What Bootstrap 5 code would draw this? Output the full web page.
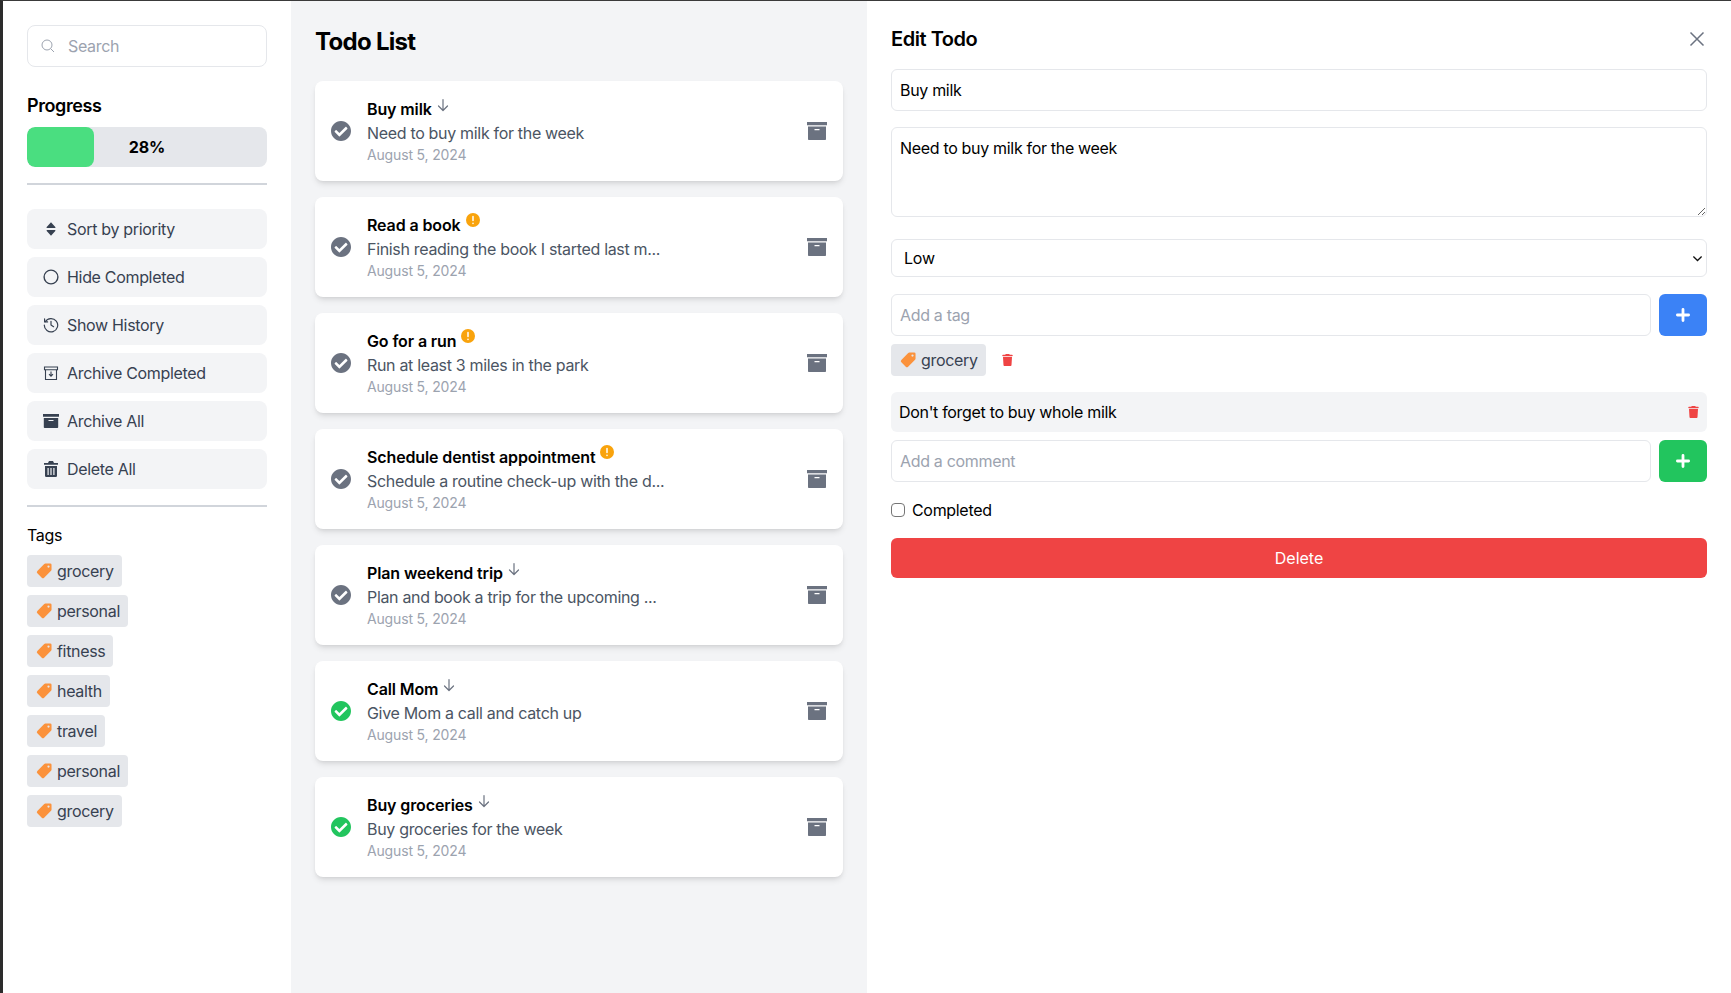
<!DOCTYPE html>
<html lang="en">
<head>
<meta charset="utf-8">
<title>Todo List</title>
<link href="https://cdn.jsdelivr.net/npm/bootstrap@5.3.0/dist/css/bootstrap.min.css" rel="stylesheet">
<style>
html,body{height:100%;overflow:hidden}
body{font-family:Inter,"Liberation Sans",sans-serif;font-size:16px;line-height:24px;color:#000;background:#fff;letter-spacing:-.32px}
.app-frame{height:993px;border-top:1px solid #3a3a3a;border-left:3px solid #2c2c2c}
.side-col{width:288px;padding:24px}
.list-col{width:576px;padding:24px;background:#f3f4f6}
.edit-col{width:864px;padding:24px}
.field{border:1px solid #e5e7eb;border-radius:6px;height:42px;padding:8px;font-size:16px;line-height:24px;color:#000;box-shadow:none;letter-spacing:-.32px}
.field::placeholder{color:#9ca3af;opacity:1}
.search-wrap{height:42px}
.search-field{border-radius:8px;padding-left:40px;height:42px}
.search-ico{position:absolute;left:14px;top:14px;width:14px;height:14px;color:#9ca3af}
.side-head{font-size:18px;line-height:28px;font-weight:600;margin:25px 0 7px;letter-spacing:-.4px}
.prog-track{height:40px;background:#e5e7eb;border-radius:8px;position:relative;overflow:hidden}
.prog-fill{background:#4ade80;border-radius:8px}
.prog-text{position:absolute;inset:0;font-weight:700;line-height:40px;text-align:center;letter-spacing:0}
.side-rule{border:0;border-top:2px solid #d1d5db;opacity:1;margin:16px 0 24px}
.rule-low{margin:16px 0 16px}
.side-btn{height:40px;background:#f3f4f6;color:#374151;border:0;border-radius:8px;padding:0 16px;font-size:16px;line-height:24px;text-align:left;letter-spacing:-.32px}
.side-ico{width:16px;height:16px;flex:none;color:#374151}
.tags-head{font-size:16px;line-height:24px;font-weight:400;margin-bottom:8px}
.chip{height:32px;background:#e5e7eb;color:#374151;border-radius:4px;padding:0 8px;line-height:32px;width:max-content}
.chip-ico{width:18px;height:18px;flex:none;margin-right:4px;color:#fb923c}
.page-title{font-size:24px;line-height:32px;font-weight:700;margin:1px 0 23px;letter-spacing:-.7px}
.todo-box{height:100px;border:0;border-radius:8px;padding:16px;box-shadow:0 4px 6px -1px rgba(0,0,0,.1),0 2px 4px -2px rgba(0,0,0,.1)}
.round-ico{width:20px;height:20px;flex:none}
.ico-muted{color:#6b7280}
.ico-done{color:#22c55e}
.todo-head{gap:5px}
.todo-name{font-weight:600;line-height:24px;letter-spacing:-.12px}
.todo-desc{color:#4b5563;line-height:24px}
.todo-date{color:#9ca3af;font-size:14px;line-height:20px;letter-spacing:-.16px}
.prio-low{width:12px;height:14px;margin-top:1px;color:#6b7280;flex:none}
.prio-mid{width:14px;height:14px;margin-top:0;flex:none}
.box-ico{width:20px;height:20px;flex:none;color:#6b7280}
.edit-title{font-size:20px;line-height:28px;font-weight:600;margin:0;letter-spacing:-.45px}
.close-x{width:16px;height:16px;color:#6b7280;margin-right:2px}
.note-field{height:90px;resize:vertical}
.level-field{height:38px;border:1px solid #e5e7eb;border-radius:6px;padding:0 24px 0 12px;font-size:16px;color:#000;box-shadow:none;letter-spacing:-.2px;background-position:right 3px center;background-size:11px 11px;
background-image:url("data:image/svg+xml,%3csvg xmlns='http://www.w3.org/2000/svg' viewBox='0 0 16 16'%3e%3cpath fill='none' stroke='%23111' stroke-width='1.800' d='M2 5l6 6 6-6'/%3e%3c/svg%3e")}
.add-btn{width:48px;height:42px;border:0;border-radius:6px;padding:0;flex:none}
.add-blue{background:#3b82f6}
.add-green{background:#22c55e}
.plus-ico{width:14px;height:14px;color:#fff}
.trash-red{width:11px;height:12px;color:#ef4444;flex:none}
.note-line{height:40px;background:#f3f4f6;border-radius:6px;padding:0 8px}
.check-row{height:24px;gap:7px}
.check-box{width:14px;height:14px;margin:0;border:1px solid #767676;border-radius:3px;flex:none}
.remove-btn{height:40px;background:#ef4444;color:#fff;border:0;border-radius:6px;font-size:16px;letter-spacing:0}
.gap-edit-a{margin-top:16px}
.gap-edit-b{margin-top:22px}
.gap-edit-c{margin-top:17px}
</style>
</head>
<body>
<svg width="0" height="0" class="position-absolute">
  <symbol id="i-check" viewBox="8 8 496 496"><path fill="currentColor" d="M504 256c0 136.967-111.033 248-248 248S8 392.967 8 256 119.033 8 256 8s248 111.033 248 248zM227.314 387.314l184-184c6.248-6.248 6.248-16.379 0-22.627l-22.627-22.627c-6.248-6.249-16.379-6.249-22.628 0L216 308.118l-70.059-70.059c-6.248-6.248-16.379-6.248-22.628 0l-22.627 22.627c-6.248 6.248-6.248 16.379 0 22.627l104 104c6.249 6.249 16.379 6.249 22.628.001z"/></symbol>
  <symbol id="i-box" viewBox="0 0 20 20"><path fill="currentColor" d="M0 1h20v3.2H0zM1 5.6h18v12.6a.8.8 0 0 1-.8.8H1.800a.8.8 0 0 1-.8-.8zM7.500 8v1.200h5V8z" fill-rule="evenodd"/></symbol>
  <symbol id="i-tag" viewBox="0 0 16 16"><path fill="currentColor" fill-rule="evenodd" d="M9.200 1.300h4.300a1.200 1.200 0 0 1 1.200 1.200v4.300a1.500 1.500 0 0 1-.45 1L8.100 13.900a1.500 1.500 0 0 1-2.100 0L2.100 10a1.500 1.500 0 0 1 0-2.100l6.100-6.150a1.500 1.500 0 0 1 1-.45zM12 3a1 1 0 1 0 0 2 1 1 0 0 0 0-2z"/></symbol>
  <symbol id="i-trash" viewBox="0 0 448 512"><path fill="currentColor" d="M135.2 17.700L128 32H32C14.300 32 0 46.300 0 64S14.300 96 32 96H416c17.700 0 32-14.300 32-32s-14.300-32-32-32H320l-7.200-14.300C307.400 6.800 296.300 0 284.200 0H163.800c-12.100 0-23.200 6.800-28.600 17.700zM416 128H32L53.200 467c1.600 25.300 22.600 45 47.900 45H346.900c25.300 0 46.300-19.700 47.900-45L416 128z"/></symbol>
  <symbol id="i-plus" viewBox="0 0 14 14"><path stroke="currentColor" stroke-width="2.800" stroke-linecap="round" d="M7 1.400v11.200M1.400 7h11.200"/></symbol>
  <symbol id="i-down" viewBox="0 0 12 14"><path fill="none" stroke="currentColor" stroke-width="1.200" stroke-linecap="round" stroke-linejoin="round" d="M6 1.500v11M1.500 8l4.500 4.500L10.500 8"/></symbol>
  <symbol id="i-warn" viewBox="0 0 14 14"><circle cx="7" cy="7" r="7" fill="#f9a30c"/><path stroke="#fff" stroke-width="1.500" stroke-linecap="round" d="M7 3.500v4M7 10.300v.1"/></symbol>
</svg>

<div class="app-frame d-flex">
  <aside class="side-col flex-shrink-0">
    <div class="search-wrap position-relative">
      <svg class="search-ico" viewBox="0 0 14 14"><circle cx="6" cy="6" r="5" fill="none" stroke="currentColor"/><path d="M9.700 9.700L13 13" stroke="currentColor"/></svg>
      <input class="form-control field search-field" type="text" placeholder="Search">
    </div>
    <div class="side-head">Progress</div>
    <div class="prog-track">
      <div class="prog-fill h-100" style="width:28%"></div>
      <div class="prog-text">28%</div>
    </div>
    <hr class="side-rule">
    <div class="d-flex flex-column gap-2">
      <button class="btn side-btn d-flex align-items-center gap-2" type="button">
        <svg class="side-ico" viewBox="0 0 16 16"><path fill="currentColor" d="M8 1.300l4.300 4.700a.6.600 0 0 1-.45 1H4.150a.6.600 0 0 1-.45-1zM8 14.700L3.700 10a.6.600 0 0 1 .45-1h7.700a.6.600 0 0 1 .45 1z"/></svg>Sort by priority</button>
      <button class="btn side-btn d-flex align-items-center gap-2" type="button">
        <svg class="side-ico" viewBox="0 0 16 16"><circle cx="8" cy="8" r="6.900" fill="none" stroke="currentColor" stroke-width="1.400"/></svg>Hide Completed</button>
      <button class="btn side-btn d-flex align-items-center gap-2" type="button">
        <svg class="side-ico" viewBox="0 0 16 16"><g fill="none" stroke="currentColor" stroke-width="1.200" stroke-linecap="round" stroke-linejoin="round"><path d="M2.300 4.700A6.700 6.700 0 1 1 1.300 8"/><path d="M1.600 1.900v3h3"/><path d="M8 4.300V8l2.600 1.700"/></g></svg>Show History</button>
      <button class="btn side-btn d-flex align-items-center gap-2" type="button">
        <svg class="side-ico" viewBox="0 0 16 16"><g fill="none" stroke="currentColor" stroke-width="1.100"><path d="M1.500 2h13v2.800h-13z"/><path d="M2.500 4.800v9.700h11V4.800"/><path d="M8 6.500v4.500M6 9.200l2 2 2-2"/></g></svg>Archive Completed</button>
      <button class="btn side-btn d-flex align-items-center gap-2" type="button">
        <svg class="side-ico" viewBox="0 0 16 16"><path fill="currentColor" fill-rule="evenodd" d="M0 1h16v2.700H0zM.8 5h14.400v9.200a.8.8 0 0 1-.8.8H1.600a.8.8 0 0 1-.8-.8zM5.500 7v1h5V7z"/></svg>Archive All</button>
      <button class="btn side-btn d-flex align-items-center gap-2" type="button">
        <svg class="side-ico" viewBox="0 0 16 16"><path fill="currentColor" fill-rule="evenodd" d="M6 0h4l1 2h4v1.700H1V2h4zM2 5h12v9.800a1.200 1.200 0 0 1-1.200 1.200H3.200A1.200 1.200 0 0 1 2 14.800zM4.500 7v7h1.200V7zM7.400 7v7h1.200V7zM10.300 7v7h1.200V7z"/></svg>Delete All</button>
    </div>
    <hr class="side-rule rule-low">
    <div class="tags-head">Tags</div>
    <div class="d-flex flex-column gap-2">
      <div class="chip d-flex align-items-center"><svg class="chip-ico"><use href="#i-tag"/></svg>grocery</div>
      <div class="chip d-flex align-items-center"><svg class="chip-ico"><use href="#i-tag"/></svg>personal</div>
      <div class="chip d-flex align-items-center"><svg class="chip-ico"><use href="#i-tag"/></svg>fitness</div>
      <div class="chip d-flex align-items-center"><svg class="chip-ico"><use href="#i-tag"/></svg>health</div>
      <div class="chip d-flex align-items-center"><svg class="chip-ico"><use href="#i-tag"/></svg>travel</div>
      <div class="chip d-flex align-items-center"><svg class="chip-ico"><use href="#i-tag"/></svg>personal</div>
      <div class="chip d-flex align-items-center"><svg class="chip-ico"><use href="#i-tag"/></svg>grocery</div>
    </div>
  </aside>

  <main class="list-col flex-shrink-0">
    <h1 class="page-title">Todo List</h1>
    <div class="d-flex flex-column gap-3">
      <div class="card todo-box flex-row align-items-center gap-3">
        <svg class="round-ico ico-muted"><use href="#i-check"/></svg>
        <div class="flex-grow-1">
          <div class="d-flex todo-head"><span class="todo-name">Buy milk</span><svg class="prio-low"><use href="#i-down"/></svg></div>
          <div class="todo-desc">Need to buy milk for the week</div>
          <div class="todo-date">August 5, 2024</div>
        </div>
        <svg class="box-ico"><use href="#i-box"/></svg>
      </div>
      <div class="card todo-box flex-row align-items-center gap-3">
        <svg class="round-ico ico-muted"><use href="#i-check"/></svg>
        <div class="flex-grow-1">
          <div class="d-flex todo-head"><span class="todo-name">Read a book</span><svg class="prio-mid"><use href="#i-warn"/></svg></div>
          <div class="todo-desc">Finish reading the book I started last m...</div>
          <div class="todo-date">August 5, 2024</div>
        </div>
        <svg class="box-ico"><use href="#i-box"/></svg>
      </div>
      <div class="card todo-box flex-row align-items-center gap-3">
        <svg class="round-ico ico-muted"><use href="#i-check"/></svg>
        <div class="flex-grow-1">
          <div class="d-flex todo-head"><span class="todo-name">Go for a run</span><svg class="prio-mid"><use href="#i-warn"/></svg></div>
          <div class="todo-desc">Run at least 3 miles in the park</div>
          <div class="todo-date">August 5, 2024</div>
        </div>
        <svg class="box-ico"><use href="#i-box"/></svg>
      </div>
      <div class="card todo-box flex-row align-items-center gap-3">
        <svg class="round-ico ico-muted"><use href="#i-check"/></svg>
        <div class="flex-grow-1">
          <div class="d-flex todo-head"><span class="todo-name">Schedule dentist appointment</span><svg class="prio-mid"><use href="#i-warn"/></svg></div>
          <div class="todo-desc">Schedule a routine check-up with the d...</div>
          <div class="todo-date">August 5, 2024</div>
        </div>
        <svg class="box-ico"><use href="#i-box"/></svg>
      </div>
      <div class="card todo-box flex-row align-items-center gap-3">
        <svg class="round-ico ico-muted"><use href="#i-check"/></svg>
        <div class="flex-grow-1">
          <div class="d-flex todo-head"><span class="todo-name">Plan weekend trip</span><svg class="prio-low"><use href="#i-down"/></svg></div>
          <div class="todo-desc">Plan and book a trip for the upcoming ...</div>
          <div class="todo-date">August 5, 2024</div>
        </div>
        <svg class="box-ico"><use href="#i-box"/></svg>
      </div>
      <div class="card todo-box flex-row align-items-center gap-3">
        <svg class="round-ico ico-done"><use href="#i-check"/></svg>
        <div class="flex-grow-1">
          <div class="d-flex todo-head"><span class="todo-name">Call Mom</span><svg class="prio-low"><use href="#i-down"/></svg></div>
          <div class="todo-desc">Give Mom a call and catch up</div>
          <div class="todo-date">August 5, 2024</div>
        </div>
        <svg class="box-ico"><use href="#i-box"/></svg>
      </div>
      <div class="card todo-box flex-row align-items-center gap-3">
        <svg class="round-ico ico-done"><use href="#i-check"/></svg>
        <div class="flex-grow-1">
          <div class="d-flex todo-head"><span class="todo-name">Buy groceries</span><svg class="prio-low"><use href="#i-down"/></svg></div>
          <div class="todo-desc">Buy groceries for the week</div>
          <div class="todo-date">August 5, 2024</div>
        </div>
        <svg class="box-ico"><use href="#i-box"/></svg>
      </div>
    </div>
  </main>

  <section class="edit-col flex-grow-1">
    <div class="d-flex justify-content-between align-items-center mb-3">
      <h2 class="edit-title">Edit Todo</h2>
      <svg class="close-x" viewBox="0 0 16 16"><path d="M1.500 1.500l13 13M14.500 1.500l-13 13" stroke="currentColor" stroke-width="1.500"/></svg>
    </div>
    <input class="form-control field" type="text" value="Buy milk">
    <textarea class="form-control field note-field gap-edit-a">Need to buy milk for the week</textarea>
    <select class="form-select level-field gap-edit-b"><option>Low</option><option>Medium</option><option>High</option></select>
    <div class="d-flex gap-2 gap-edit-c">
      <input class="form-control field" type="text" placeholder="Add a tag">
      <button class="btn add-btn add-blue d-flex align-items-center justify-content-center" type="button" aria-label="Add tag"><svg class="plus-ico"><use href="#i-plus"/></svg></button>
    </div>
    <div class="d-flex align-items-center mt-2">
      <div class="chip d-flex align-items-center"><svg class="chip-ico"><use href="#i-tag"/></svg>grocery</div>
      <svg class="trash-red ms-3"><use href="#i-trash"/></svg>
    </div>
    <div class="note-line d-flex align-items-center justify-content-between gap-edit-a">
      <span>Don't forget to buy whole milk</span>
      <svg class="trash-red"><use href="#i-trash"/></svg>
    </div>
    <div class="d-flex gap-2 mt-2">
      <input class="form-control field" type="text" placeholder="Add a comment">
      <button class="btn add-btn add-green d-flex align-items-center justify-content-center" type="button" aria-label="Add comment"><svg class="plus-ico"><use href="#i-plus"/></svg></button>
    </div>
    <div class="check-row d-flex align-items-center gap-edit-a">
      <input class="form-check-input check-box" type="checkbox" id="doneBox">
      <label for="doneBox">Completed</label>
    </div>
    <button class="btn remove-btn w-100 gap-edit-a" type="button">Delete</button>
  </section>
</div>
<script src="https://cdn.jsdelivr.net/npm/bootstrap@5.3.0/dist/js/bootstrap.bundle.min.js"></script>
</body>
</html>
